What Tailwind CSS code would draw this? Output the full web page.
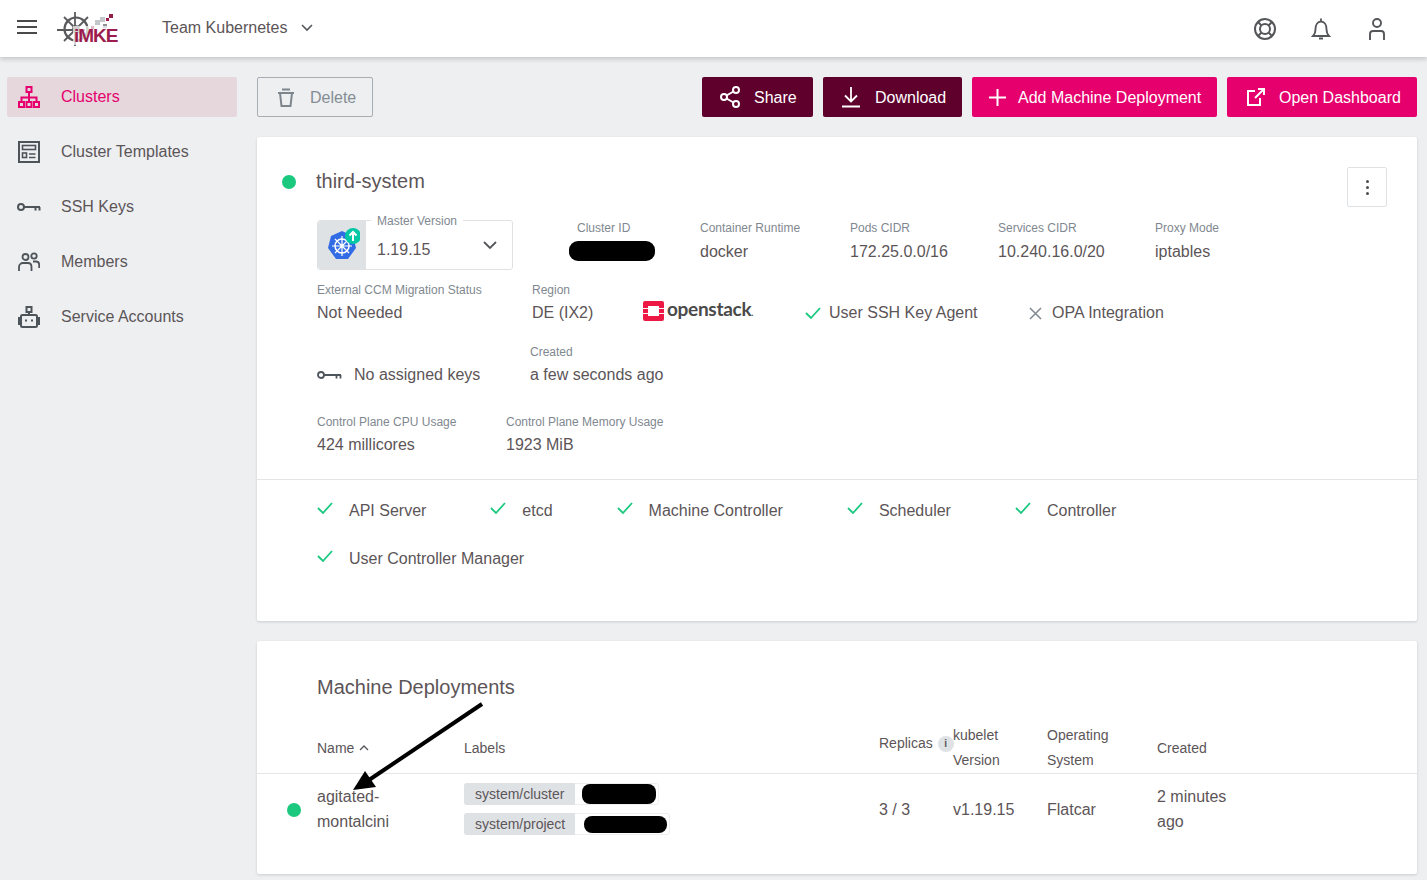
<!DOCTYPE html>
<html lang="en">
  <head>
    <meta charset="UTF-8" />
    <title>Kubermatic - Cluster details</title>
    <script src="https://cdn.jsdelivr.net/npm/@tailwindcss/browser@4"></script>
  </head>
  <body class="relative h-[880px] overflow-hidden bg-[#edeff1] font-['Liberation_Sans',Arial,sans-serif] text-[16px] text-[#5c5558]">
    <header class="relative z-10 flex h-[57px] items-center bg-white pl-[17px] shadow-[0_2px_5px_rgba(0,0,0,0.18)]">
      <svg class="h-[20px] w-[20px]" viewBox="0 0 20 20" stroke="#4a4a4d" stroke-width="1.8"><path d="M0 2h20M0 8h20M0 14h20" /></svg>
      <div class="relative ml-[20px] h-[36px] w-[65px]">
        <svg class="absolute left-0 top-0" width="65" height="36" viewBox="0 0 65 36" fill="none" stroke="#5b5b5e">
          <circle cx="19" cy="18" r="11.500" stroke-width="2.200" />
          <circle cx="19" cy="18" r="3" stroke-width="1.600" />
          <path d="M18 1v34M0 19h28M7 6l24 24M31 6L7 30" stroke-width="1.800" />
          <g fill="#c4c7ca" stroke="none"><rect x="38" y="9" width="5" height="5" /><rect x="43" y="6" width="5" height="5" /><rect x="46" y="13" width="4" height="4" fill="#8f9296" /></g>
          <rect x="49" y="7" width="3" height="3" fill="#a3174f" stroke="none" />
          <rect x="52" y="3" width="4" height="4" fill="#8f1d48" stroke="none" />
          <rect x="34" y="15" width="3" height="3" fill="#8f1d48" stroke="none" />
        </svg>
        <span class="absolute bottom-[2px] left-[16px] bg-white/70 pl-[1px] text-[19px] font-bold leading-[19px] tracking-[-1px] text-[#9b1c4d]">iMKE</span>
      </div>
      <span class="ml-[40px] -mt-[2px]">Team Kubernetes</span>
      <svg class="ml-[14px] -mt-[2px] h-[8px] w-[12px]" viewBox="0 0 12 8" fill="none" stroke="#55565a" stroke-width="1.6"><path d="M1 1l5 5 5-5" /></svg>
      <div class="ml-auto mr-[38px] flex items-center gap-[32px]">
        <svg width="24" height="24" viewBox="0 0 24 24" fill="none" stroke="#55565a" stroke-width="2"><circle cx="12" cy="12" r="10" /><circle cx="12" cy="12" r="5" /><path d="M5 5l3.500 3.500M19 5l-3.500 3.500M5 19l3.500-3.500M19 19l-3.500-3.500" /></svg>
        <svg width="24" height="24" viewBox="0 0 24 24" fill="none" stroke="#55565a" stroke-width="1.8"><path d="M4 19h16c-2-2-2.500-3.500-2.500-7 0-4-2-7.500-5.500-7.500S6.500 8 6.500 12c0 3.500-.5 5-2.500 7zM12 1.500v3M10 21.500h4" /></svg>
        <svg width="24" height="24" viewBox="0 0 24 24" fill="none" stroke="#55565a" stroke-width="1.9"><circle cx="12" cy="6" r="4" /><path d="M5 23v-6a3 3 0 0 1 3-3h8a3 3 0 0 1 3 3v6" /></svg>
      </div>
    </header>

    <div class="flex">
      <aside class="w-[257px] shrink-0 pl-[7px] pr-[20px] pt-[20px]">
        <nav class="flex flex-col gap-[15px]">
          <a class="flex h-[40px] items-center rounded-[2px] bg-[#e6d7dc] pl-[11px] text-[#e5006d]">
            <svg class="mr-[21px]" width="22" height="22" viewBox="0 0 22 22" fill="none" stroke="#e5006d" stroke-width="2"><rect x="8.500" y="1" width="5" height="5" /><rect x="1" y="16" width="5" height="5" /><rect x="8.500" y="16" width="5" height="5" /><rect x="16" y="16" width="5" height="5" /><path d="M11 6v10M3.500 16v-4.500h15V16" /></svg>
            Clusters
          </a>
          <a class="flex h-[40px] items-center pl-[11px]">
            <svg class="mr-[21px]" width="22" height="22" viewBox="0 0 22 22" fill="none" stroke="#4d545a" stroke-width="2"><rect x="1" y="1" width="20" height="20" /><rect x="4.500" y="4.500" width="13" height="4" stroke-width="1.600" /><rect x="4.500" y="12" width="4" height="4.500" stroke-width="1.600" /><path d="M11 13h6.500M11 16.500h6.500" stroke-width="1.600" /></svg>
            Cluster Templates
          </a>
          <a class="flex h-[40px] items-center pl-[10px]">
            <svg class="mr-[20px]" width="24" height="22" viewBox="0 0 24 22" fill="none" stroke="#4d545a" stroke-width="2"><circle cx="4" cy="11" r="3" /><path d="M7 11h16M18.500 11v3.500M22.500 11v3.500" /></svg>
            SSH Keys
          </a>
          <a class="flex h-[40px] items-center pl-[11px]">
            <svg class="mr-[21px]" width="22" height="22" viewBox="0 0 22 22" fill="none" stroke="#4d545a" stroke-width="1.800"><circle cx="7.500" cy="6" r="3" /><circle cx="16" cy="5" r="2.700" /><path d="M1 20v-4c0-2.500 2-4 4-4h5c2 0 3.500 1.500 3.500 4v4M15 10.500h3c2 0 3.200 1.500 3.200 3.500v3" /></svg>
            Members
          </a>
          <a class="flex h-[40px] items-center pl-[11px]">
            <svg class="mr-[21px]" width="22" height="22" viewBox="0 0 22 22" fill="none" stroke="#4d545a" stroke-width="2"><rect x="8.500" y="1" width="5" height="5" /><path d="M11 6v3" /><rect x="3" y="9" width="16" height="12" rx="1.500" /><path d="M3 12H1v6h2M19 12h2v6h-2" /><path d="M7 14.500h2M13 14.500h2" /></svg>
            Service Accounts
          </a>
        </nav>
      </aside>

      <main class="w-[1160px] pt-[20px]">
        <div class="flex items-center gap-[10px]">
          <button class="mr-auto flex h-[40px] w-[116px] items-center rounded-[2px] border border-[#a6adb3] pl-[20px] text-[#858d94]">
            <svg class="mr-[16px]" width="16" height="19" viewBox="0 0 16 19" fill="none" stroke="#7e868d" stroke-width="2"><path d="M0 5h16M4 1.500h8M2 5l1.500 13h9L14 5" /></svg>
            <span class="mt-[2px]">Delete</span>
          </button>
          <button class="flex h-[40px] w-[111px] items-center rounded-[2px] bg-[#5f002c] pl-[18px] text-white">
            <svg class="mr-[14px]" width="20" height="22" viewBox="0 0 20 22" fill="none" stroke="#fff" stroke-width="2"><circle cx="4" cy="11" r="3" /><circle cx="16" cy="4" r="3" /><circle cx="16" cy="18" r="3" /><path d="M6.500 9.500l7-4M6.500 12.500l7 4" /></svg>
            <span class="mt-[2px]">Share</span>
          </button>
          <button class="flex h-[40px] w-[139px] items-center rounded-[2px] bg-[#5f002c] pl-[18px] text-white">
            <svg class="mr-[14px]" width="20" height="22" viewBox="0 0 20 22" fill="none" stroke="#fff" stroke-width="1.800"><path d="M10 1v14M4 9.500l6 6 6-6M1 20.500h18" /></svg>
            <span class="mt-[2px]">Download</span>
          </button>
          <button class="flex h-[40px] w-[245px] items-center rounded-[2px] bg-[#e5006d] pl-[17px] text-white">
            <svg class="mr-[12px]" width="17" height="17" viewBox="0 0 17 17" fill="none" stroke="#fff" stroke-width="2"><path d="M8.500 0v17M0 8.500h17" /></svg>
            <span class="mt-[2px]">Add Machine Deployment</span>
          </button>
          <button class="flex h-[40px] w-[190px] items-center rounded-[2px] bg-[#e5006d] pl-[20px] text-white">
            <svg class="mr-[14px]" width="18" height="18" viewBox="0 0 18 18" fill="none" stroke="#fff" stroke-width="2"><path d="M8 3H1v14h12v-7M8 10l9-9M11 1h6v6" /></svg>
            <span class="mt-[2px]">Open Dashboard</span>
          </button>
        </div>

        <section class="mt-[20px] h-[484px] rounded-[2px] bg-white shadow-[0_1px_3px_rgba(0,0,0,0.15)]">
          <div class="relative flex h-[83px] items-start pl-[25px] pt-[30px]">
            <span class="mt-[8px] h-[14px] w-[14px] rounded-full bg-[#1ac87e]"></span>
            <h1 class="ml-[20px] text-[20px] leading-[28px]">third-system</h1>
            <button class="absolute right-[30px] top-[30px] flex h-[40px] w-[40px] flex-col items-center justify-center gap-[3px] rounded-[2px] border border-[#dfe2e5]">
              <i class="h-[3px] w-[3px] rounded-full bg-[#4d4d50]"></i><i class="h-[3px] w-[3px] rounded-full bg-[#4d4d50]"></i><i class="h-[3px] w-[3px] rounded-full bg-[#4d4d50]"></i>
            </button>
          </div>

          <div class="pl-[60px]">
            <div class="flex h-[50px] items-start">
              <div class="relative flex h-[50px] w-[196px] items-center rounded-[3px] border border-[#dfe2e5]">
                <div class="flex h-full w-[48px] items-center justify-center rounded-l-[3px] bg-[#dfe2e5]">
                  <svg width="36" height="36" viewBox="0 0 36 36">
                    <path d="M18 4l11 5 3 12-8 11H12L4 21 7 9z" fill="#326ce5" />
                    <circle cx="18" cy="19" r="7" fill="none" stroke="#fff" stroke-width="1.500" />
                    <path d="M18 9v20M8 19h20M11 12l14 14M25 12L11 26" stroke="#fff" stroke-width="1.200" />
                    <circle cx="29" cy="9" r="8" fill="#00c8a5" />
                    <path d="M29 14V5M25.500 8.500L29 5l3.500 3.500" stroke="#fff" stroke-width="2" fill="none" />
                  </svg>
                </div>
                <span class="absolute -top-[7px] left-[53px] bg-white px-[6px] text-[12px] leading-[14px] text-[#7f8890]">Master Version</span>
                <span class="ml-[11px] mt-[10px]">1.19.15</span>
                <svg class="absolute right-[15px] top-[20px]" width="14" height="9" viewBox="0 0 14 9" fill="none" stroke="#55565a" stroke-width="1.800"><path d="M1 1l6 6 6-6" /></svg>
              </div>
              <div class="ml-[56px] w-[131px] text-[12px] leading-[14px] text-[#7f8890]">
                <div class="ml-[8px] leading-[16px]">Cluster ID</div>
                <div class="mt-[5px] h-[20px] w-[86px] rounded-[9px] bg-black"></div>
              </div>
              <div class="w-[150px]"><div class="text-[12px] leading-[16px] text-[#7f8890]">Container Runtime</div><div class="mt-[4px] leading-[24px]">docker</div></div>
              <div class="w-[148px]"><div class="text-[12px] leading-[16px] text-[#7f8890]">Pods CIDR</div><div class="mt-[4px] leading-[24px]">172.25.0.0/16</div></div>
              <div class="w-[157px]"><div class="text-[12px] leading-[16px] text-[#7f8890]">Services CIDR</div><div class="mt-[4px] leading-[24px]">10.240.16.0/20</div></div>
              <div><div class="text-[12px] leading-[16px] text-[#7f8890]">Proxy Mode</div><div class="mt-[4px] leading-[24px]">iptables</div></div>
            </div>

            <div class="mt-[12px] flex h-[44px] items-start">
              <div class="w-[215px]"><div class="text-[12px] leading-[16px] text-[#7f8890]">External CCM Migration Status</div><div class="mt-[3px] leading-[24px]">Not Needed</div></div>
              <div class="w-[111px]"><div class="text-[12px] leading-[16px] text-[#7f8890]">Region</div><div class="mt-[3px] leading-[24px]">DE (IX2)</div></div>
              <div class="mt-[17px] flex w-[162px] items-center">
                <svg width="21" height="20" viewBox="0 0 21 20"><path d="M2 0h17a2 2 0 0 1 2 2v16a2 2 0 0 1-2 2H2a2 2 0 0 1-2-2V2a2 2 0 0 1 2-2z" fill="#ed1944" /><rect x="5" y="5" width="11" height="10" fill="#fff" /><path d="M0 7.500h5M16 7.500h5M0 12.500h5M16 12.500h5" stroke="#fff" stroke-width="1.200" /></svg>
                <span class="ml-[3px] font-['Lato',sans-serif] text-[19px] font-bold leading-[20px] tracking-[-0.3px] text-[#4a4a4a]">openstack<span class="text-[9px]">.</span></span>
              </div>
              <div class="mt-[19px] flex w-[224px] items-center">
                <svg class="mr-[8px]" width="16" height="13" viewBox="0 0 16 13" fill="none" stroke="#1ac87e" stroke-width="1.800"><path d="M1 6l5 5 9-10" /></svg>
                User SSH Key Agent
              </div>
              <div class="mt-[19px] flex items-center">
                <svg class="mr-[10px]" width="13" height="13" viewBox="0 0 13 13" fill="none" stroke="#7f8890" stroke-width="1.500"><path d="M1 1l11 11M12 1L1 12" /></svg>
                OPA Integration
              </div>
            </div>

            <div class="mt-[18px] flex h-[44px] items-start">
              <div class="mt-[19px] flex w-[213px] items-center">
                <svg class="mr-[12px]" width="25" height="12" viewBox="0 0 25 12" fill="none" stroke="#4d545a" stroke-width="1.800"><circle cx="4" cy="6" r="3" /><path d="M7 6h17M19.500 6v3.500M23.500 6v3.500" /></svg>
                No assigned keys
              </div>
              <div><div class="text-[12px] leading-[16px] text-[#7f8890]">Created</div><div class="mt-[3px] leading-[24px]">a few seconds ago</div></div>
            </div>

            <div class="mt-[26px] flex h-[44px] items-start">
              <div class="w-[189px]"><div class="text-[12px] leading-[16px] text-[#7f8890]">Control Plane CPU Usage</div><div class="mt-[3px] leading-[24px]">424 millicores</div></div>
              <div><div class="text-[12px] leading-[16px] text-[#7f8890]">Control Plane Memory Usage</div><div class="mt-[3px] leading-[24px]">1923 MiB</div></div>
            </div>
          </div>

          <div class="mt-[21px] flex flex-wrap gap-x-[64px] gap-y-[24px] border-t border-[#e3e5e7] pl-[60px] pr-[60px] pt-[19px]">
            <div class="flex h-[24px] items-center"><svg class="mr-[16px] -mt-[6px]" width="16" height="13" viewBox="0 0 16 13" fill="none" stroke="#1ac87e" stroke-width="1.800"><path d="M1 6l5 5 9-10" /></svg>API Server</div>
            <div class="flex h-[24px] items-center"><svg class="mr-[16px] -mt-[6px]" width="16" height="13" viewBox="0 0 16 13" fill="none" stroke="#1ac87e" stroke-width="1.800"><path d="M1 6l5 5 9-10" /></svg>etcd</div>
            <div class="flex h-[24px] items-center"><svg class="mr-[16px] -mt-[6px]" width="16" height="13" viewBox="0 0 16 13" fill="none" stroke="#1ac87e" stroke-width="1.800"><path d="M1 6l5 5 9-10" /></svg>Machine Controller</div>
            <div class="flex h-[24px] items-center"><svg class="mr-[16px] -mt-[6px]" width="16" height="13" viewBox="0 0 16 13" fill="none" stroke="#1ac87e" stroke-width="1.800"><path d="M1 6l5 5 9-10" /></svg>Scheduler</div>
            <div class="flex h-[24px] items-center"><svg class="mr-[16px] -mt-[6px]" width="16" height="13" viewBox="0 0 16 13" fill="none" stroke="#1ac87e" stroke-width="1.800"><path d="M1 6l5 5 9-10" /></svg>Controller</div>
            <div class="flex h-[24px] items-center"><svg class="mr-[16px] -mt-[6px]" width="16" height="13" viewBox="0 0 16 13" fill="none" stroke="#1ac87e" stroke-width="1.800"><path d="M1 6l5 5 9-10" /></svg>User Controller Manager</div>
          </div>
        </section>

        <section class="mt-[20px] h-[233px] rounded-[2px] bg-white shadow-[0_1px_3px_rgba(0,0,0,0.15)]">
          <h2 class="pl-[60px] pt-[32px] text-[20px] leading-[28px]">Machine Deployments</h2>
          <div class="mt-[20px] grid h-[53px] grid-cols-[60px_147px_415px_74px_94px_110px_1fr] items-center border-b border-[#e3e5e7] text-[14px]">
            <div></div>
            <div class="mt-[3px] flex items-center">Name<svg class="ml-[5px] -mt-[2px]" width="10" height="6" viewBox="0 0 10 6" fill="none" stroke="#55565a" stroke-width="1.300"><path d="M1 5l4-4 4 4" /></svg></div>
            <div class="mt-[3px]">Labels</div>
            <div class="-mt-[7px] flex items-center">Replicas<span class="ml-[5px] flex h-[16px] w-[16px] shrink-0 items-center justify-center rounded-full bg-[#dfe2e5] text-[10px] font-bold">i</span></div>
            <div class="mt-[2px] leading-[25px]">kubelet<br />Version</div>
            <div class="mt-[2px] leading-[25px]">Operating<br />System</div>
            <div class="mt-[3px]">Created</div>
          </div>
          <div class="grid h-[70px] grid-cols-[60px_147px_415px_74px_94px_110px_1fr] items-center">
            <div class="pl-[30px] pt-[2px]"><div class="h-[14px] w-[14px] rounded-full bg-[#1ac87e]"></div></div>
            <div class="leading-[25px]">agitated-<br />montalcini</div>
            <div class="flex flex-col gap-[8px] text-[14px]">
              <div class="flex h-[22px] w-[195px] items-center rounded-[3px] border border-[#eceef0]"><span class="-ml-[1px] flex h-[22px] w-[111px] items-center rounded-l-[3px] bg-[#dfe2e5] pl-[11px]">system/cluster</span><i class="ml-[7px] h-[20px] w-[74px] rounded-[8px] bg-black"></i></div>
              <div class="flex h-[22px] w-[206px] items-center rounded-[3px] border border-[#eceef0]"><span class="-ml-[1px] flex h-[22px] w-[111px] items-center rounded-l-[3px] bg-[#dfe2e5] pl-[11px]">system/project</span><i class="ml-[9px] h-[17px] w-[83px] rounded-[8px] bg-black"></i></div>
            </div>
            <div class="mt-[2px]">3 / 3</div>
            <div class="mt-[2px]">v1.19.15</div>
            <div class="mt-[2px]">Flatcar</div>
            <div class="w-[90px] leading-[25px]">2 minutes ago</div>
          </div>
        </section>
      </main>
    </div>

    <svg class="pointer-events-none absolute left-0 top-0" width="1427" height="880" viewBox="0 0 1427 880" fill="none">
      <path d="M482 704L366 782" stroke="#000" stroke-width="4" />
      <path d="M353 790L365 771 376 787z" fill="#000" />
    </svg>
  </body>
</html>
